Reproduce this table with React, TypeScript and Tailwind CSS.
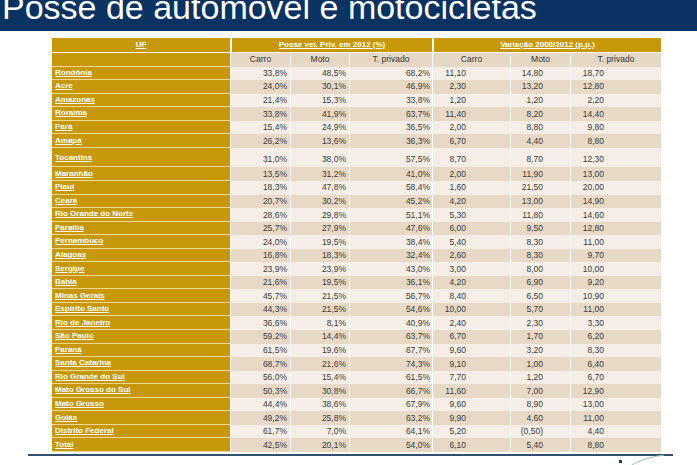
import React from 'react';

type Row = { uf: string; v: string[]; tall?: boolean };

const rows: Row[] = [
  { uf: 'Rondônia', v: ['33,8%', '48,5%', '68,2%', '11,10', '14,80', '18,70'] },
  { uf: 'Acre', v: ['24,0%', '30,1%', '46,9%', '2,30', '13,20', '12,80'] },
  { uf: 'Amazonas', v: ['21,4%', '15,3%', '33,8%', '1,20', '1,20', '2,20'] },
  { uf: 'Roraima', v: ['33,8%', '41,9%', '63,7%', '11,40', '8,20', '14,40'] },
  { uf: 'Pará', v: ['15,4%', '24,9%', '36,5%', '2,00', '8,80', '9,80'] },
  { uf: 'Amapá', v: ['26,2%', '13,6%', '36,3%', '6,70', '4,40', '8,80'] },
  { uf: 'Tocantins', v: ['31,0%', '38,0%', '57,5%', '8,70', '8,70', '12,30'], tall: true },
  { uf: 'Maranhão', v: ['13,5%', '31,2%', '41,0%', '2,00', '11,90', '13,00'] },
  { uf: 'Piauí', v: ['18,3%', '47,8%', '58,4%', '1,60', '21,50', '20,00'] },
  { uf: 'Ceará', v: ['20,7%', '30,2%', '45,2%', '4,20', '13,00', '14,90'] },
  { uf: 'Rio Grande do Norte', v: ['28,6%', '29,8%', '51,1%', '5,30', '11,80', '14,60'] },
  { uf: 'Paraíba', v: ['25,7%', '27,9%', '47,6%', '6,00', '9,50', '12,80'] },
  { uf: 'Pernambuco', v: ['24,0%', '19,5%', '38,4%', '5,40', '8,30', '11,00'] },
  { uf: 'Alagoas', v: ['16,8%', '18,3%', '32,4%', '2,60', '8,30', '9,70'] },
  { uf: 'Sergipe', v: ['23,9%', '23,9%', '43,0%', '3,00', '8,00', '10,00'] },
  { uf: 'Bahia', v: ['21,6%', '19,5%', '36,1%', '4,20', '6,90', '9,20'] },
  { uf: 'Minas Gerais', v: ['45,7%', '21,5%', '56,7%', '8,40', '6,50', '10,90'] },
  { uf: 'Espírito Santo', v: ['44,3%', '21,5%', '54,6%', '10,00', '5,70', '11,00'] },
  { uf: 'Rio de Janeiro', v: ['36,6%', '8,1%', '40,9%', '2,40', '2,30', '3,30'] },
  { uf: 'São Paulo', v: ['59,2%', '14,4%', '63,7%', '6,70', '1,70', '6,20'] },
  { uf: 'Paraná', v: ['61,5%', '19,6%', '67,7%', '9,60', '3,20', '8,30'] },
  { uf: 'Santa Catarina', v: ['68,7%', '21,6%', '74,3%', '9,10', '1,00', '6,40'] },
  { uf: 'Rio Grande do Sul', v: ['56,0%', '15,4%', '61,5%', '7,70', '1,20', '6,70'] },
  { uf: 'Mato Grosso do Sul', v: ['50,3%', '30,8%', '66,7%', '11,60', '7,00', '12,90'] },
  { uf: 'Mato Grosso', v: ['44,4%', '38,6%', '67,9%', '9,60', '8,90', '13,00'] },
  { uf: 'Goiás', v: ['49,2%', '25,8%', '63,2%', '9,90', '4,60', '11,00'] },
  { uf: 'Distrito Federal', v: ['61,7%', '7,0%', '64,1%', '5,20', '(0,50)', '4,40'] },
  { uf: 'Total', v: ['42,5%', '20,1%', '54,0%', '6,10', '5,40', '8,80'] },
];

const cols = 'grid grid-cols-[178px_60px_59px_83px_78px_60px_91px]';
// right padding per value column, so the numbers line up like the slide
const pads = ['pr-[3px]', 'pr-[3px]', 'pr-[2px]', 'pr-[44px]', 'pr-[27px]', 'pr-[57px]'];

function DataRow({ row, i }: { row: Row; i: number }) {
  const bg = i % 2 === 0 ? 'bg-[#f4eee7]' : 'bg-[#e7d9c5]';
  const h = row.tall ? 'h-[19.7px] items-end pb-[2px]' : 'h-[13.55px] items-center';
  return (
    <div className={cols}>
      <div
        className={`${h} flex border-b border-[#eed893] bg-[#c7980a] pl-[3px] text-[8px] font-bold text-white underline underline-offset-1`}
      >
        {row.uf}
      </div>
      {row.v.map((v, j) => (
        <div
          key={j}
          className={`${h} ${bg} ${pads[j]} flex justify-end border-l border-white text-[8.5px] text-[#3a3a3a]`}
        >
          {v}
        </div>
      ))}
    </div>
  );
}

export default function App() {
  return (
    <div className="relative h-[465px] w-[697px] overflow-hidden bg-white font-['Liberation_Sans',Arial,sans-serif]">
      <div className="h-[31px] overflow-hidden bg-[#0a3262]">
        <div className="-mt-[10px] whitespace-nowrap pl-[2px] text-[34px] leading-[34px] text-white">
          Posse de automóvel e motocicletas
        </div>
      </div>

      <div className="ml-[52px] mt-[7px] w-[609px]">
        <div className={`${cols} h-[14.5px] border-b border-white text-[8px] font-bold text-white underline underline-offset-1`}>
          <div className="flex items-center justify-center bg-[#c7980a]">UF</div>
          <div className="col-span-3 flex items-center justify-center border-l-2 border-white bg-[#c7980a]">
            Posse veí. Priv. em 2012 (%)
          </div>
          <div className="col-span-3 flex items-center justify-center border-l-2 border-white bg-[#c7980a]">
            Variação 2008/2012 (p.p.)
          </div>
        </div>
        <div className={`${cols} h-[14px] text-[8.5px] text-[#333]`}>
          <div className="border-b border-[#eed893] bg-[#c7980a]" />
          {['Carro', 'Moto', 'T. privado', 'Carro', 'Moto', 'T. privado'].map((t, j) => (
            <div key={j} className="flex items-center justify-center border-l border-white bg-[#e5d8c4]">
              {t}
            </div>
          ))}
        </div>
        {rows.map((r, i) => (
          <DataRow key={r.uf} row={r} i={i} />
        ))}
      </div>

      <div className="ml-[28px] mt-[2px] h-[2px] w-[645px] bg-[#34506f]" />

      {/* logo fragment peeking in at the bottom right */}
      <div className="absolute left-[619px] top-[460px] h-[3px] w-[3px] bg-[#1d3557]" />
      <svg className="absolute left-[630px] top-[452px]" width="40" height="14" viewBox="0 0 40 14">
        <path d="M2 13 C 10 8, 20 5, 34 3" fill="none" stroke="#8fc9a8" strokeWidth="1" />
      </svg>
    </div>
  );
}
